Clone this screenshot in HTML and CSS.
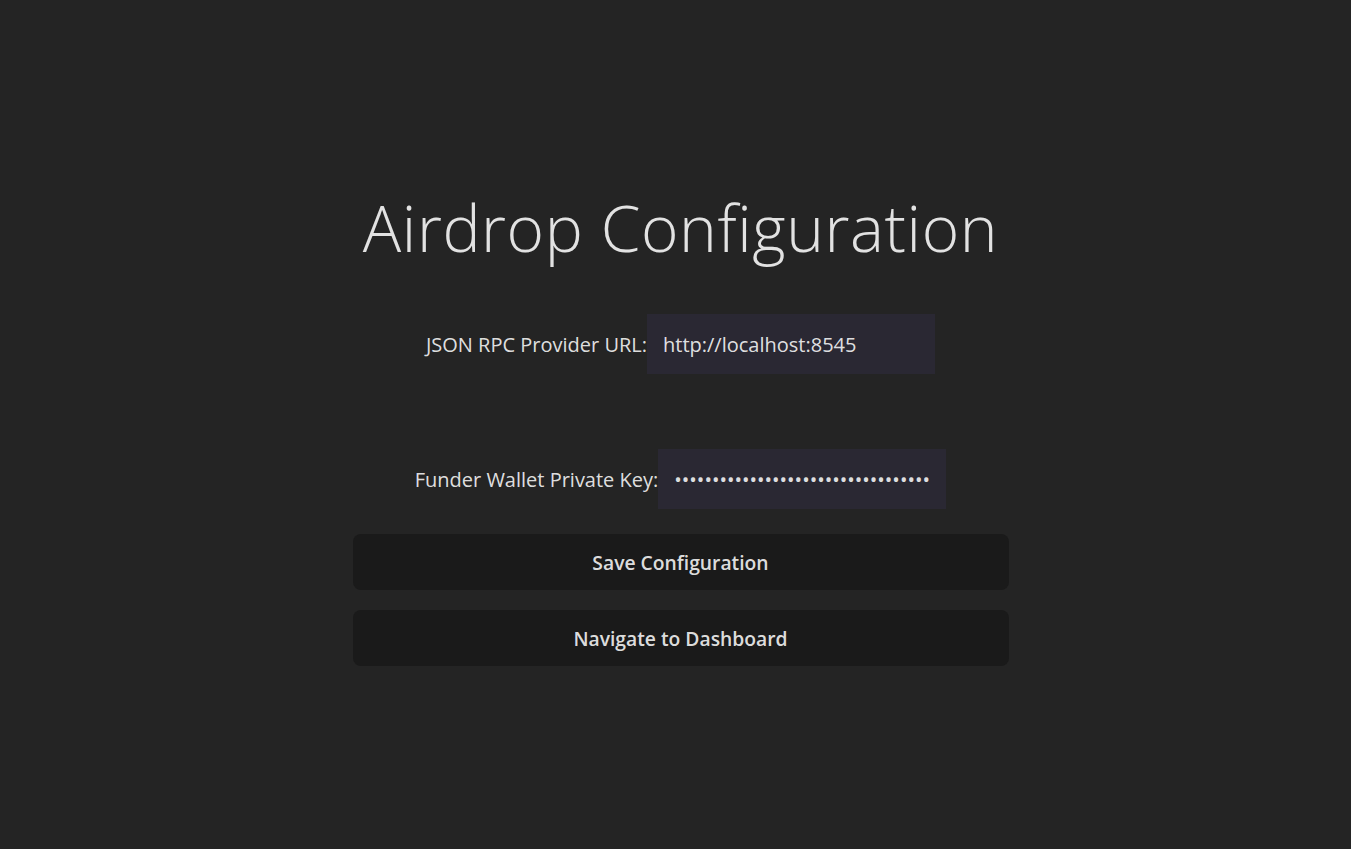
FILE: index.html
```html
<!DOCTYPE html>
<html lang="en">
<head>
<meta charset="UTF-8">
<title>Airdrop Configuration</title>
<link rel="stylesheet" href="styles.css">
</head>
<body>
<main class="app">
  <h1 class="title">Airdrop Configuration</h1>
  <form class="config">
    <div class="field field-first">
      <label class="field-label" for="rpc">JSON RPC Provider URL:</label>
      <input class="field-input" id="rpc" type="text" value="http://localhost:8545">
    </div>
    <div class="field field-second">
      <label class="field-label" for="key">Funder Wallet Private Key:</label>
      <input class="field-input field-input-key" id="key" type="password" value="0123456789abcdef0123456789abcdef01">
    </div>
    <button class="btn" type="button">Save Configuration</button>
    <button class="btn" type="button">Navigate to Dashboard</button>
  </form>
</main>
</body>
</html>
```

FILE: styles.css
```css
* { box-sizing: border-box; }
html, body { margin: 0; padding: 0; }
body {
  background: #242424;
  color: rgba(255, 255, 255, 0.87);
  font-family: "Open Sans", "Noto Sans", sans-serif;
  min-height: 100vh;
}
.app {
  width: 656px;
  margin: 0 auto;
  padding-top: 193px;
  position: relative;
  left: 5px;
  display: flex;
  flex-direction: column;
  align-items: center;
}
.title {
  margin: 0;
  font-size: 64px;
  line-height: 70px;
  font-weight: 300;
  letter-spacing: 0.6px;
  white-space: nowrap;
}
.config {
  width: 100%;
  display: flex;
  flex-direction: column;
  align-items: stretch;
  margin-top: 51px;
}
.field {
  display: flex;
  justify-content: center;
  align-items: center;
  font-size: 20px;
}
.field-second { margin-top: 75px; }
.field-label { white-space: nowrap; }
.field-input {
  width: 288px;
  height: 60px;
  padding: 0 16px;
  border: none;
  outline: none;
  background: #2a2833;
  color: rgba(255, 255, 255, 0.87);
  font-family: inherit;
  font-size: 20px;
}
.field-input-key { letter-spacing: 0; }
.btn {
  height: 56px;
  border: 1px solid transparent;
  border-radius: 8px;
  background: #1a1a1a;
  color: rgba(255, 255, 255, 0.87);
  font-family: inherit;
  font-size: 19.3px;
  font-weight: 600;
  cursor: pointer;
}
.btn:first-of-type { margin-top: 25px; }
.btn + .btn { margin-top: 20px; }
```
